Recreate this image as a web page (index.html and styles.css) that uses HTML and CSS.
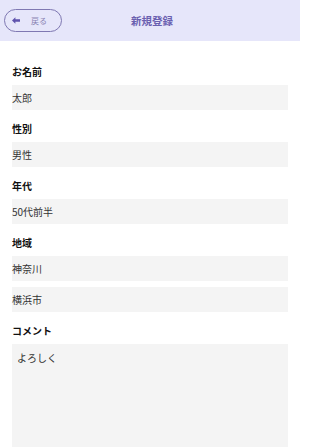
FILE: index.html
```html
<!DOCTYPE html>
<html lang="ja">
<head>
<meta charset="utf-8">
<link rel="stylesheet" href="styles.css">
</head>
<body>
<div class="page">
<header class="header">
  <button class="back">
    <svg class="back-icon" width="8" height="7" viewBox="0 0 8 7"><path d="M0 3.5 L3.4 0.3 L3.4 2.2 L8 2.2 L8 4.8 L3.4 4.8 L3.4 6.7 Z" fill="#5f53ad"/></svg>
    <span class="back-text">戻る</span>
  </button>
  <div class="title">新規登録</div>
  <div class="spacer"></div>
</header>
<main class="form">
  <div class="group">
    <div class="label">お名前</div>
    <div class="field">太郎</div>
  </div>
  <div class="group">
    <div class="label">性別</div>
    <div class="field">男性</div>
  </div>
  <div class="group">
    <div class="label">年代</div>
    <div class="field">50代前半</div>
  </div>
  <div class="group">
    <div class="label">地域</div>
    <div class="field">神奈川</div>
    <div class="field">横浜市</div>
  </div>
  <div class="group">
    <div class="label">コメント</div>
    <div class="textarea">よろしく</div>
  </div>
</main>
</div>
</body>
</html>
```
FILE: styles.css
```css
html, body {
  margin: 0;
  padding: 0;
  background: #ffffff;
  font-family: "Noto Sans CJK JP", "Noto Sans", sans-serif;
  overflow: hidden;
}
.page {
  width: 300px;
  height: 447px;
  overflow: hidden;
}
.header {
  height: 41px;
  background: #e6e6fa;
  display: flex;
  align-items: center;
  padding: 0 4px;
  box-sizing: border-box;
}
.back {
  width: 58px;
  height: 23px;
  border: 1px solid #7f78b2;
  border-radius: 12px;
  background: transparent;
  display: flex;
  align-items: center;
  padding: 0 0 0 7px;
  box-sizing: border-box;
  font-family: inherit;
}
.back-icon {
  display: block;
}
.back-text {
  margin-left: 11px;
  font-size: 8px;
  color: #8a84b4;
  line-height: 1;
}
.title {
  flex: 1;
  text-align: center;
  font-size: 10.5px;
  font-weight: bold;
  color: #6a60b0;
  margin-left: 4px;
}
.spacer {
  width: 58px;
}
.form {
  padding: 23px 12px 0 12px;
  display: flex;
  flex-direction: column;
  gap: 11px;
}
.group {
  display: flex;
  flex-direction: column;
  gap: 6px;
}
.label {
  font-size: 10px;
  font-weight: bold;
  color: #111;
  line-height: 16px;
  margin-bottom: -1px;
}
.field {
  height: 25px;
  background: #f4f4f4;
  font-size: 10px;
  color: #333;
  line-height: 25px;
}
.textarea {
  height: 103px;
  box-sizing: border-box;
  background: #f4f4f4;
  font-size: 10px;
  color: #333;
  padding: 6px 5px;
  line-height: 16px;
}
```
